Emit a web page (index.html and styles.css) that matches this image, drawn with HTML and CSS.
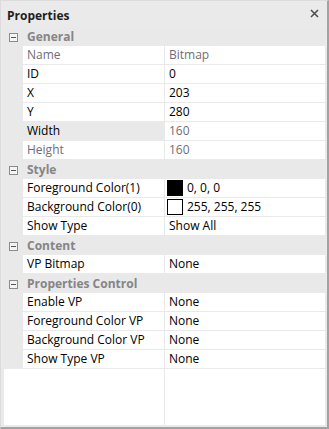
FILE: index.html
```html
<!DOCTYPE html>
<html>
<head>
<meta charset="utf-8">
<link rel="stylesheet" href="styles.css">
</head>
<body>
<div class="window">
  <div class="titlebar">
    <span class="title">Properties</span>
    <svg class="close" width="9" height="9" viewBox="0 0 9 9"><path d="M1 1 L8 8 M8 1 L1 8" stroke="#4a4a4a" stroke-width="1.5" fill="none"/></svg>
  </div>
  <div class="grid">
    <div class="group"><span class="toggle"></span><span class="gname">General</span></div>
    <div class="row"><div class="gutter"></div><div class="name dim">Name</div><div class="value dim">Bitmap</div></div>
    <div class="row"><div class="gutter"></div><div class="name">ID</div><div class="value">0</div></div>
    <div class="row"><div class="gutter"></div><div class="name">X</div><div class="value">203</div></div>
    <div class="row"><div class="gutter"></div><div class="name">Y</div><div class="value">280</div></div>
    <div class="row"><div class="gutter"></div><div class="name selected">Width</div><div class="value dim">160</div></div>
    <div class="row"><div class="gutter"></div><div class="name dim">Height</div><div class="value dim">160</div></div>
    <div class="group"><span class="toggle"></span><span class="gname">Style</span></div>
    <div class="row"><div class="gutter"></div><div class="name">Foreground Color(1)</div><div class="value"><span class="swatch black"></span>0, 0, 0</div></div>
    <div class="row"><div class="gutter"></div><div class="name">Background Color(0)</div><div class="value"><span class="swatch white"></span>255, 255, 255</div></div>
    <div class="row"><div class="gutter"></div><div class="name">Show Type</div><div class="value">Show All</div></div>
    <div class="group"><span class="toggle"></span><span class="gname">Content</span></div>
    <div class="row"><div class="gutter"></div><div class="name">VP Bitmap</div><div class="value">None</div></div>
    <div class="group"><span class="toggle"></span><span class="gname">Properties Control</span></div>
    <div class="row"><div class="gutter"></div><div class="name">Enable VP</div><div class="value">None</div></div>
    <div class="row"><div class="gutter"></div><div class="name">Foreground Color VP</div><div class="value">None</div></div>
    <div class="row"><div class="gutter"></div><div class="name">Background Color VP</div><div class="value">None</div></div>
    <div class="row"><div class="gutter"></div><div class="name">Show Type VP</div><div class="value">None</div></div>
    <div class="filler"></div>
  </div>
</div>
</body>
</html>
```

FILE: styles.css
```css
* { box-sizing: border-box; }
html, body { margin: 0; padding: 0; background: #ffffff; }
body {
  font-family: "Open Sans", "Noto Sans", sans-serif;
  font-size: 12px;
  color: #000;
}
.window {
  width: 329px;
  height: 429px;
  background: #eaeaea;
  border-top: 1px solid #dcdcdc;
  border-left: 1px solid #dcdcdc;
  border-right: 2px solid #a2a2a2;
  border-bottom: 2px solid #a2a2a2;
  padding: 0 2px 2px 3px;
  display: flex;
  flex-direction: column;
}
.titlebar {
  height: 26px;
  display: flex;
  align-items: center;
  justify-content: space-between;
  padding: 2px 6px 0 3px;
}
.title {
  font-weight: bold;
  font-size: 12px;
  color: #1e1e1e;
}
.close { display: block; margin-top: -4px; }
.grid {
  flex: 1;
  background: #fff;
  display: flex;
  flex-direction: column;
}
.group {
  height: 19px;
  background: #e9e9e9;
  display: flex;
  align-items: center;
}
.toggle {
  width: 9px;
  height: 9px;
  border: 1px solid #8c8c8c;
  margin-left: 5px;
  margin-right: 9px;
  margin-top: 1px;
  position: relative;
  background: #f4f4f4;
}
.toggle::after {
  content: "";
  position: absolute;
  left: 1px;
  top: 3px;
  width: 5px;
  height: 1px;
  background: #555;
}
.gname {
  font-weight: bold;
  color: #858585;
  line-height: 18px;
}
.row {
  height: 19px;
  display: grid;
  grid-template-columns: 19px 141px 1fr;
}
.gutter { background: #e9e9e9; }
.name, .value {
  border-bottom: 1px solid #e9e9e9;
  line-height: 18px;
  padding-left: 4px;
  white-space: nowrap;
  overflow: hidden;
}
.value {
  border-left: 1px solid #e9e9e9;
  display: flex;
  align-items: center;
}
.selected { background: #e9e9e9; }
.dim { color: #6e6e78; }
.swatch {
  width: 16px;
  height: 16px;
  border: 1px solid #000;
  margin-left: -2px;
  margin-right: 4px;
  display: inline-block;
}
.swatch.black { background: #000; }
.swatch.white { background: #fff; }
.filler {
  flex: 1;
  background: linear-gradient(to right, transparent 160px, #e9e9e9 160px, #e9e9e9 161px, transparent 161px);
}
```
